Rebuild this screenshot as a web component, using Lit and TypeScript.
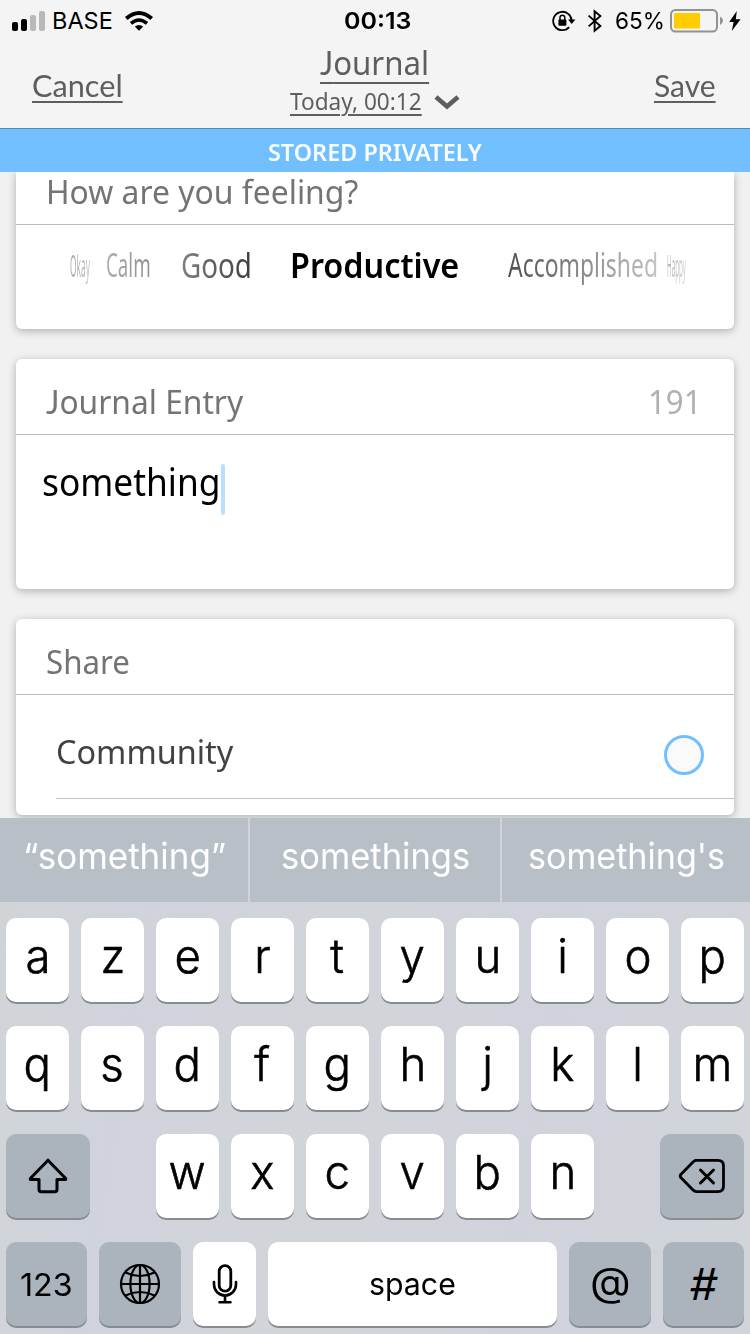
import { LitElement, html, css, svg } from "lit";
import { customElement, property } from "lit/decorators.js";
import { styleMap } from "lit/directives/style-map.js";

/** A single line of text, stretched horizontally to a set width. */
@customElement("fit-text")
class FitText extends LitElement {
  @property({ type: Number }) width = 0;
  static styles = css`
    :host { display: block; white-space: nowrap; flex: none; }
    .line { display: inline-block; transform-origin: 0 50%; text-decoration: inherit; background: inherit; background-clip: inherit; -webkit-background-clip: inherit; }
  `;
  firstUpdated() {
    const line = this.renderRoot.querySelector(".line") as HTMLElement;
    this.style.width = `${this.width}px`;
    line.style.transform = `scaleX(${this.width / line.offsetWidth})`;
  }
  render() {
    return html`<span class="line"><slot></slot></span>`;
  }
}

@customElement("status-bar")
class StatusBar extends LitElement {
  static styles = css`
    :host { display: grid; grid-template-columns: 1fr 66px 1fr; height: 40px; font: 400 23.5px/41px Inter, "Liberation Sans", sans-serif; color: #000; }
    .side { display: flex; align-items: center; }
    .left { padding-left: 12px; }
    .right { justify-content: flex-end; padding-right: 9px; }
    .carrier { margin-left: 6px; }
    .wifi { margin-left: 11px; }
    .time { font-weight: 600; padding-left: 2px; }
    .bt { margin-left: 11px; }
    .pct { margin-left: 12px; }
    .batt { margin-left: 5px; }
    .bolt { margin-left: 6px; }
    svg { display: block; flex: none; }
  `;
  render() {
    return html`
      <div class="side left">
        <svg width="34" height="20" viewBox="0 0 34 20">
          <rect x="0" y="11" width="6" height="9" rx="2"/><rect x="9" y="8" width="6" height="12" rx="2"/>
          <rect x="18" y="4" width="6" height="16" rx="2" fill="#b9b9b9"/><rect x="27" y="0" width="6" height="20" rx="2" fill="#b9b9b9"/>
        </svg>
        <fit-text class="carrier" width="61">BASE</fit-text>
        <svg class="wifi" width="30" height="22" viewBox="0 0 30 22" fill="none" stroke="#000" stroke-width="4">
          <path d="M2.3 8.6Q15-2.6 27.7 8.6"/><path d="M7 13.4Q15 6.6 23 13.4" stroke-width="3.6"/>
          <path d="M10.8 16.4Q15 13.4 19.2 16.4L15 20.7z" fill="#000" stroke="none"/>
        </svg>
      </div>
      <fit-text class="time" width="67">00:13</fit-text>
      <div class="side right">
        <svg width="24" height="22" viewBox="0 0 24 22">
          <path d="M19.6 11.5A9.2 9.2 0 1 0 17.2 17.2" fill="none" stroke="#000" stroke-width="1.8"/>
          <path d="M16 9.4h7.4L19.7 14z"/><rect x="6.4" y="9.4" width="8" height="6.4" rx="1"/>
          <path d="M8 10V7.6a2.4 2.4 0 0 1 4.8 0V10" fill="none" stroke="#000" stroke-width="1.5"/>
        </svg>
        <svg class="bt" width="16" height="24" viewBox="0 0 16 24" fill="none" stroke="#000" stroke-width="1.9">
          <path d="M1.6 6.6 13.4 17 7.6 21.8V2.2L13.4 7 1.6 17.4"/>
        </svg>
        <fit-text class="pct" width="50">65%</fit-text>
        <svg class="batt" width="53" height="24" viewBox="0 0 53 24">
          <rect x="1" y="1" width="46" height="21.5" rx="4.5" fill="none" stroke="#929292" stroke-width="2"/>
          <rect x="4" y="4" width="26" height="15.5" rx="1" fill="#ffcc00"/>
          <path d="M50 7.5Q53 9.5 53 11.8T50 16z" fill="#929292"/>
        </svg>
        <svg class="bolt" width="12" height="20" viewBox="0 0 12 20"><path d="M7.8 0 .2 11h4.4L2.8 20 11.6 8.2H6.8z"/></svg>
      </div>`;
  }
}

@customElement("nav-header")
class NavHeader extends LitElement {
  static styles = css`
    :host { display: grid; grid-template-columns: 1fr 172px 1fr; height: 88px; padding: 0 34px 0 32px; border-bottom: 1px solid #4f89b5; color: #5e5e5e; font-family: "Noto Sans", sans-serif; }
    .action { font: 400 31px/40px Lato, sans-serif; padding-top: 25px; }
    .action fit-text { text-decoration: underline 2px; text-underline-offset: 4px; }
    .end { justify-self: end; }
    .center { display: flex; flex-direction: column; align-items: center; margin-left: 1px; }
    .title { font-size: 33.5px; line-height: 44px; text-decoration: underline 2px; text-underline-offset: 7px; }
    .cap { font-family: Lato, sans-serif; }
    .sub { display: flex; align-items: center; gap: 12px; font-size: 24px; line-height: 34px; }
    .date { text-decoration: underline 2px; text-underline-offset: 4px; }
    .center svg { display: block; margin-top: 3px; }
  `;
  render() {
    return html`
      <div class="action"><fit-text width="91">Cancel</fit-text></div>
      <div class="center">
        <fit-text class="title" width="109"><span class="cap">J</span>ournal</fit-text>
        <div class="sub">
          <fit-text class="date" width="132">Today, 00:12</fit-text>
          <svg width="26" height="15" viewBox="0 0 26 15"><path d="M2 2 13 11.5 24 2" fill="none" stroke="#5e5e5e" stroke-width="4.6"/></svg>
        </div>
      </div>
      <div class="action end"><fit-text width="62">Save</fit-text></div>`;
  }
}

const MOODS = [
  { text: "Okay", width: 20, gap: 53.5, size: 31, from: "#a8a8a8", to: "#c0c0c0" },
  { text: "Calm", width: 45, gap: 16, size: 32.5, from: "#adadad", to: "#8f8f8f" },
  { text: "Good", width: 71, gap: 30, size: 34, from: "#808080", to: "#3c3c3c" },
  { text: "Productive", width: 169, gap: 38, size: 33.5, from: "#000", to: "#000", strong: true },
  { text: "Accomplished", width: 150, gap: 49, size: 33, from: "#505050", to: "#c4c4c4" },
  { text: "Happy", width: 19, gap: 9, size: 31, from: "#b4b4b4", to: "#cccccc" },
];

@customElement("journal-form")
class JournalForm extends LitElement {
  static styles = css`
    :host { display: flex; flex-direction: column; gap: 30px; height: 646px; overflow: hidden; background: #f1f1f1; padding: 0 16px; box-sizing: border-box; font: 34px/66px "Noto Sans", sans-serif; }
    .card { flex: none; background: #fff; border-radius: 6px; box-shadow: 0 2px 8px rgba(0,0,0,.28); box-sizing: border-box; }
    .feeling { height: 157px; border-radius: 0 0 6px 6px; }
    .entry { height: 230px; }
    .share { height: 196px; }
    .head { display: flex; justify-content: space-between; height: 66px; padding: 9px 34px 0 30px; border-bottom: 1px solid #bcbcbc; color: #747474; font-size: 33.5px; }
    .feeling .head { height: 52px; padding-top: 0; line-height: 39px; }
    .cap { font-family: Lato, sans-serif; }
    .count { color: #b0b0b0; margin-right: -2px; }
    .moods { display: flex; line-height: 80px; }
    .mood { background-clip: text; -webkit-background-clip: text; color: transparent; }
    .strong { font-weight: 600; }
    .body { display: flex; padding: 29px 0 0 26px; font-size: 37.5px; line-height: 36px; color: #000; }
    .caret { width: 4px; height: 51px; border-radius: 2px; background: #b8dfff; }
    .row { display: flex; align-items: center; justify-content: space-between; height: 103px; margin-left: 40px; padding-right: 30px; border-bottom: 1px solid #c4c4c4; color: #424242; font-size: 33.5px; }
    .label { margin-top: 8px; }
    .radio { width: 40px; height: 40px; margin-top: 17px; box-sizing: border-box; border: 3px solid #72bfff; border-radius: 50%; background: #fafafa; }
  `;
  render() {
    return html`
      <section class="card feeling">
        <div class="head"><fit-text width="312">How are you feeling?</fit-text></div>
        <div class="moods">
          ${MOODS.map((m) => html`<fit-text class="mood ${m.strong ? "strong" : ""}" .width=${m.width}
            style=${styleMap({ marginLeft: `${m.gap}px`, fontSize: `${m.size}px`, backgroundImage: `linear-gradient(90deg, ${m.from}, ${m.to})` })}>${m.text}</fit-text>`)}
        </div>
      </section>
      <section class="card entry">
        <div class="head"><fit-text width="197"><span class="cap">J</span>ournal Entry</fit-text><fit-text class="count" width="54">191</fit-text></div>
        <div class="body"><fit-text width="179">something</fit-text><div class="caret"></div></div>
      </section>
      <section class="card share">
        <div class="head"><fit-text width="84">Share</fit-text></div>
        <div class="row"><fit-text class="label" width="177">Community</fit-text><div class="radio"></div></div>
      </section>`;
  }
}

const line = (d: string, w: number) => svg`<path d=${d} fill="none" stroke="#000" stroke-width=${w} stroke-linecap="round" stroke-linejoin="round"/>`;

@customElement("soft-keyboard")
class SoftKeyboard extends LitElement {
  static styles = css`
    :host { display: block; height: 516px; background: linear-gradient(100deg, #d1d4d6, #d0d3dc 20%, #d1d4d8 45%, #d0d3dc 70%, #d1d4d8); font-family: Inter, "Liberation Sans", sans-serif; color: #000; }
    .hints { display: grid; grid-template-columns: 248px 250px 248px; gap: 2px; height: 84px; font-size: 36px; line-height: 77px; color: #fff; }
    .hint { display: flex; justify-content: center; background: #b8bfc7; }
    .rows { display: flex; flex-direction: column; gap: 24px; padding: 16px 6px 0; }
    .row { display: flex; gap: 12px; height: 84px; }
    .key { display: flex; justify-content: center; width: 63px; border-radius: 10px; background: #fff; box-shadow: 0 2px 0 #888b8f; font-size: 47px; font-weight: 300; line-height: 75px; }
    .glyph { transform: scaleX(.97); -webkit-text-stroke: .6px #000; }
    .icon { align-items: center; }
    .dark { background: #abb3bd; }
    .shift { width: 84px; margin-right: 54px; }
    .back { width: 84px; margin-left: 54px; }
    .num { width: 81px; }
    .fn { width: 82px; }
    .space { width: 289px; }
    .small { font-size: 31px; font-weight: 400; line-height: 83px; }
    .num.small { line-height: 85px; }
    .sym { font-size: 40px; font-weight: 400; line-height: 80px; }
    .hash { font-size: 44px; line-height: 84px; }
    .hash fit-text { transform: skewX(-4deg); }
    svg { display: block; }
  `;
  key(c: string) {
    return html`<div class="key"><span class="glyph">${c}</span></div>`;
  }
  render() {
    return html`
      <div class="hints">
        <div class="hint"><fit-text width="203">“something”</fit-text></div>
        <div class="hint"><fit-text width="189">somethings</fit-text></div>
        <div class="hint"><fit-text width="197">something's</fit-text></div>
      </div>
      <div class="rows">
        <div class="row">${[..."azertyuiop"].map(this.key)}</div>
        <div class="row">${[..."qsdfghjklm"].map(this.key)}</div>
        <div class="row">
          <div class="key dark icon shift"><svg width="40" height="36" viewBox="0 0 40 36">${line("M20 2.2 37.7 20.5Q38 21.6 37 21.6H29V31.5Q29 33.8 26.7 33.8H13.3Q11 33.8 11 31.5V21.6H3Q2 21.6 2.3 20.5Z", 3)}</svg></div>
          ${[..."wxcvbn"].map(this.key)}
          <div class="key dark icon back"><svg width="48" height="36" viewBox="0 0 48 36">
            ${line("M17.5 2.4H40Q45.5 2.4 45.5 8V28Q45.5 33.6 40 33.6H18.5Q16.5 33.6 15 32L2.8 19.6Q1.6 18 2.8 16.4L15 4Q16.5 2.4 18.5 2.4", 2.8)}${line("M22.5 12 35.5 25M35.5 12 22.5 25", 3)}
          </svg></div>
        </div>
        <div class="row">
          <div class="key dark small num"><fit-text width="53">123</fit-text></div>
          <div class="key dark icon fn"><svg width="42" height="42" viewBox="0 0 42 42">
            <g fill="none" stroke="#000" stroke-width="2.2"><circle cx="21" cy="21" r="19"/><ellipse cx="21" cy="21" rx="9.6" ry="19"/><path d="M21 2V40M2 21H40M6.5 9.5Q21 16.5 35.5 9.5M6.5 32.5Q21 25.5 35.5 32.5"/></g>
          </svg></div>
          <div class="key icon"><svg width="26" height="40" viewBox="0 0 26 40">
            <rect x="7.2" y="1.6" width="11.6" height="25.6" rx="5.8" fill="none" stroke="#000" stroke-width="2.8"/>${line("M2 18V20.5A11 11 0 0 0 24 20.5V18M13 31.5V38M7.5 38.2H18.5", 2.6)}
          </svg></div>
          <div class="key small space"><fit-text width="87">space</fit-text></div>
          <div class="key dark sym fn"><fit-text width="41">@</fit-text></div>
          <div class="key dark sym hash num"><fit-text width="28">#</fit-text></div>
        </div>
      </div>`;
  }
}

@customElement("app-root")
class AppRoot extends LitElement {
  static styles = css`
    :host { display: block; width: 750px; height: 1334px; overflow: hidden; background: #f4f4f4; }
    .banner { display: flex; justify-content: center; height: 43px; background: #72bfff; color: #f8fcff; font: 600 23.5px/46px "Noto Sans", sans-serif; }
  `;
  render() {
    return html`
      <status-bar></status-bar>
      <nav-header></nav-header>
      <div class="banner"><fit-text width="214">STORED PRIVATELY</fit-text></div>
      <journal-form></journal-form>
      <soft-keyboard></soft-keyboard>`;
  }
}
